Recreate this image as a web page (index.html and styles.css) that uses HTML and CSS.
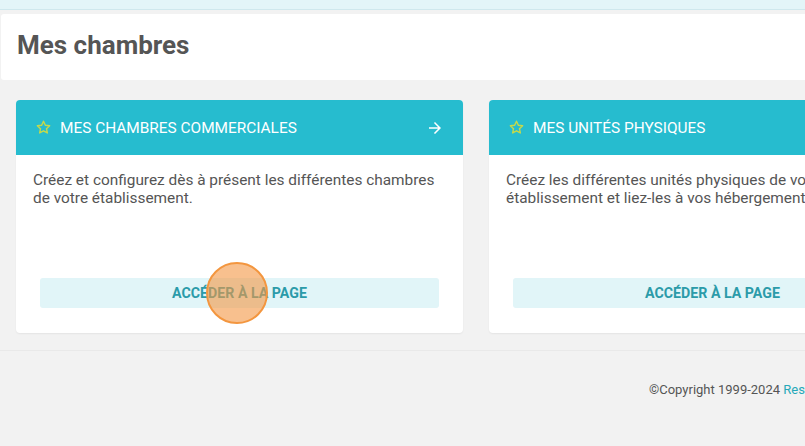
FILE: index.html
```html
<!DOCTYPE html>
<html lang="fr">
<head>
<meta charset="utf-8">
<title>Mes chambres</title>
<link rel="stylesheet" href="styles.css">
</head>
<body>
<div class="topbar"></div>
<div class="page-header"><h1 class="title">Mes chambres</h1></div>
<div class="cards">
  <div class="card">
    <div class="card-head">
      <svg class="star" viewBox="0 0 24 24" width="17" height="17"><path d="M12 3.2l2.6 5.6 6.1.7-4.5 4.2 1.2 6-5.4-3-5.4 3 1.2-6-4.5-4.2 6.1-.7z" fill="none" stroke="#c6d94a" stroke-width="2" stroke-linejoin="round"/></svg>
      <span class="head-text">MES CHAMBRES COMMERCIALES</span>
      <svg class="arrow" viewBox="0 0 24 24" width="18" height="18"><path d="M12 4l-1.41 1.41L16.17 11H4v2h12.17l-5.58 5.59L12 20l8-8z" fill="#fff"/></svg>
    </div>
    <div class="card-body">
      <p class="desc">Créez et configurez dès à présent les différentes chambres de votre établissement.</p>
      <div class="btn">ACCÉDER À LA PAGE<span class="click"></span></div>
    </div>
  </div>
  <div class="card">
    <div class="card-head">
      <svg class="star" viewBox="0 0 24 24" width="17" height="17"><path d="M12 3.2l2.6 5.6 6.1.7-4.5 4.2 1.2 6-5.4-3-5.4 3 1.2-6-4.5-4.2 6.1-.7z" fill="none" stroke="#c6d94a" stroke-width="2" stroke-linejoin="round"/></svg>
      <span class="head-text">MES UNITÉS PHYSIQUES</span>
      <svg class="arrow" viewBox="0 0 24 24" width="18" height="18"><path d="M12 4l-1.41 1.41L16.17 11H4v2h12.17l-5.58 5.59L12 20l8-8z" fill="#fff"/></svg>
    </div>
    <div class="card-body">
      <p class="desc">Créez les différentes unités physiques de votre établissement et liez-les à vos hébergements.</p>
      <div class="btn">ACCÉDER À LA PAGE</div>
    </div>
  </div>
</div>
<footer class="footer"><span>©Copyright 1999-2024 <a class="link">Reservit</a></span></footer>
</body>
</html>
```
FILE: styles.css
```css
html, body {
  margin: 0;
  padding: 0;
}
body {
  background: #f2f2f2;
  font-family: Roboto, "Liberation Sans", sans-serif;
  color: #555;
  overflow: hidden;
  width: 805px;
  height: 446px;
}
.topbar {
  height: 9px;
  background: #e3f5f8;
  border-bottom: 1px solid #cfe8ed;
}
.page-header {
  margin-top: 4px;
  height: 66px;
  background: #fff;
  border-radius: 3px 0 0 3px;
  margin-left: 1px;
  padding: 15px 0 0 16px;
  box-sizing: border-box;
}
.title {
  margin: 0;
  font-size: 26px;
  line-height: 32px;
  font-weight: 700;
  color: #555;
}
.cards {
  display: flex;
  gap: 26px;
  padding: 20px 0 0 16px;
  width: max-content;
}
.card {
  width: 447px;
  height: 233px;
  background: #fff;
  border-radius: 4px;
  box-shadow: 0 1px 2px rgba(0,0,0,0.06);
  display: flex;
  flex-direction: column;
  overflow: hidden;
}
.card-head {
  height: 55px;
  flex-shrink: 0;
  background: #26bccf;
  color: #fff;
  display: flex;
  align-items: center;
  padding: 0 19px 0 19px;
}
.star {
  flex-shrink: 0;
  margin-right: 8px;
}
.head-text {
  font-size: 15.4px;
  flex: 1;
}
.arrow {
  flex-shrink: 0;
}
.card-body {
  flex: 1;
  display: flex;
  flex-direction: column;
  padding: 16px 17px 25px;
}
.desc {
  margin: 0;
  font-size: 15.4px;
  line-height: 18px;
  color: #555;
}
.btn {
  position: relative;
  margin: auto 7px 0;
  height: 30px;
  background: #e1f5f8;
  border-radius: 3px;
  color: #2b9ba9;
  font-weight: 700;
  font-size: 14.2px;
  display: flex;
  align-items: center;
  justify-content: center;
}
.click {
  position: absolute;
  left: 166px;
  top: -16px;
  width: 58px;
  height: 58px;
  border-radius: 50%;
  background: rgba(244, 150, 66, 0.6);
  border: 2px solid #f3963f;
}
.footer {
  margin-top: 17px;
  border-top: 1px solid #e9e9e9;
  padding: 31px 0 0 649px;
  font-size: 13px;
  line-height: 16px;
  white-space: nowrap;
  color: #555;
}
.link {
  color: #26a9b9;
}
```
